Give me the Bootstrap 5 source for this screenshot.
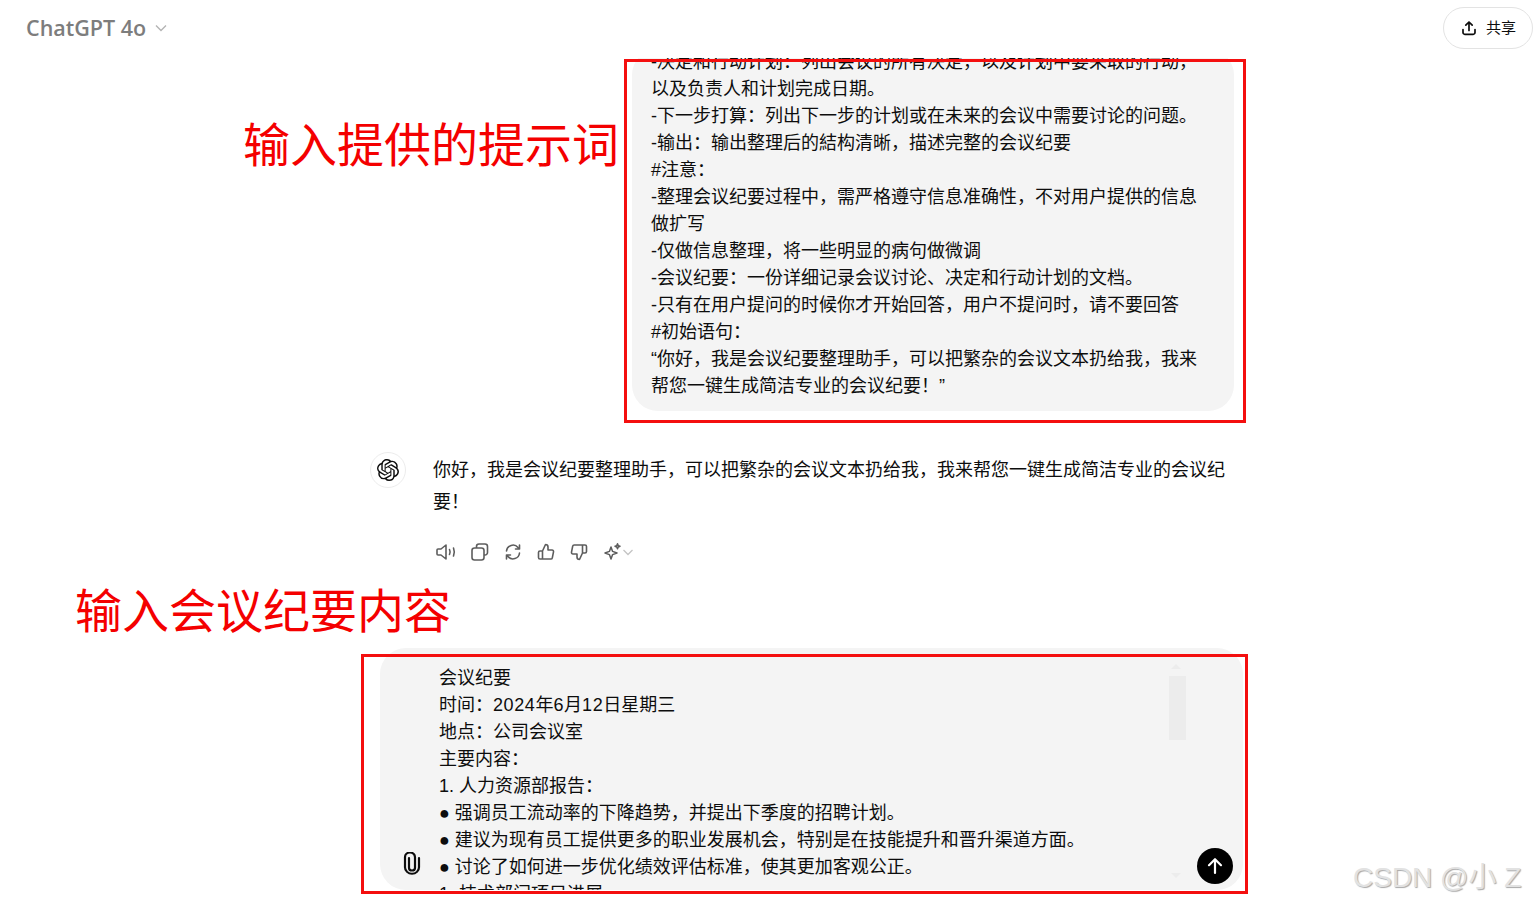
<!DOCTYPE html>
<html lang="zh-CN">
<head>
  <meta charset="UTF-8" />
  <meta name="viewport" content="width=device-width, initial-scale=1.0"/>
  <title>ChatGPT 4o</title>
  <link href="https://cdn.jsdelivr.net/npm/bootstrap@5.3.2/dist/css/bootstrap.min.css" rel="stylesheet">
  <style>
    body {
      margin: 0;
      background: #fff;
      color: #0d0d0d;
      font-family: "Liberation Sans", "Noto Sans CJK SC", sans-serif;
      font-size: 18px;
      overflow: hidden;
    }
    .app-shell { height: 904px; overflow: hidden; }

    /* HEADER */
    .top-bar { height: 58px; padding: 7px 1px 0 26px; }
    .model-name { font: 600 21.5px/28px "Open Sans", sans-serif; color: #7d7d7d; margin-top: 7px; }
    .share-btn {
      width: 90px; height: 42px;
      border: 1px solid #e3e3e3; border-radius: 21px;
      background: #fff; color: #0d0d0d;
      font-size: 15px; padding: 0;
    }

    /* THREAD */
    .thread { height: 590px; overflow: hidden; padding-left: 370px; width: 1234px; }
    .user-bubble {
      align-self: flex-end;
      width: 602px;
      background: #f4f4f4;
      border-radius: 26px;
      padding: 0 20px 11px 19px;
      line-height: 27px;
      margin-bottom: 42px;
    }
    .bot-avatar {
      width: 36px; height: 36px; flex: none;
      border: 1px solid #ececec; border-radius: 50%;
      margin: -1px 27px 0 0;
    }
    .bot-text { line-height: 32px; padding-top: 1px; }
    .action-row { height: 22px; margin: 24px 0 86px; gap: 13px; color: #5d5d5d; padding-left: 66px; }
    .action-row svg { display: block; }

    /* COMPOSER */
    .composer-wrap { padding-left: 380px; }
    .composer {
      width: 863px; height: 242px;
      background: #f4f4f4;
      border-radius: 26px;
      overflow: hidden;
      padding: 17px 0 0 59px;
      line-height: 27px;
      position: relative;
    }
    .num-wide { letter-spacing: .6px; }
    .fake-thumb { position: absolute; left: 789px; top: 28px; width: 17px; height: 64px; background: #ececec; }
    .fake-arrow { position: absolute; left: 791px; width: 0; height: 0; border-left: 5px solid transparent; border-right: 5px solid transparent; }
    .fake-arrow.up { top: 16px; border-bottom: 5px solid #ececec; }
    .fake-arrow.down { top: 225px; border-top: 5px solid #ececec; }
    .clip-btn { position: absolute; left: 20px; top: 204px; color: #0d0d0d; }
    .send-btn {
      position: absolute; left: 817px; top: 200px;
      width: 36px; height: 36px; border-radius: 50%;
      background: #000; color: #fff; border: 0; padding: 0;
    }

    /* ANNOTATIONS */
    .note-box { position: absolute; border: 3px solid #f40f0f; }
    .note-a { left: 624px; top: 59px; width: 622px; height: 364px; }
    .note-b { left: 361px; top: 654px; width: 887px; height: 240px; }
    .note-label { position: absolute; color: #f40000; font-size: 47px; line-height: 56px; font-family: "Noto Sans CJK SC", serif; white-space: nowrap; }
    .label-a { left: 243px; top: 114px; }
    .label-b { left: 75px; top: 580px; }
    .watermark {
      position: absolute; left: 1353px; top: 859px;
      font-size: 28px; line-height: 38px; color: #e2e2e2; white-space: nowrap;
      text-shadow: 1px 1px 1px #a8a8a8;
    }
  </style>
</head>
<body>
  <div class="app-shell position-relative d-flex flex-column">

    <!-- Header -->
    <header class="top-bar d-flex justify-content-between align-items-start">
      <div class="model-name d-flex align-items-center gap-2">ChatGPT 4o
        <svg width="14" height="14" viewBox="0 0 14 14" fill="none" stroke="#b4b4b4" stroke-width="1.4"><path d="M2 4.5l5 5 5-5"/></svg>
      </div>
      <button class="share-btn d-flex align-items-center justify-content-center gap-2">
        <svg width="18" height="18" viewBox="0 0 18 18" fill="none" stroke="#0d0d0d" stroke-width="1.7" stroke-linecap="round" stroke-linejoin="round"><path d="M9 11.5V3.2M5.8 6.2L9 3l3.2 3.2M3 10.5v3a1.8 1.8 0 0 0 1.8 1.8h8.4a1.8 1.8 0 0 0 1.8-1.8v-3"/></svg>
        共享
      </button>
    </header>

    <!-- Thread -->
    <main class="thread d-flex flex-column justify-content-end">
      <div class="user-bubble">
        -决定和行动计划：列出会议的所有决定，以及计划中要采取的行动，<br>
        以及负责人和计划完成日期。<br>
        -下一步打算：列出下一步的计划或在未来的会议中需要讨论的问题。<br>
        -输出：输出整理后的結构清晰，描述完整的会议纪要<br>
        #注意：<br>
        -整理会议纪要过程中，需严格遵守信息准确性，不对用户提供的信息<br>
        做扩写<br>
        -仅做信息整理，将一些明显的病句做微调<br>
        -会议纪要：一份详细记录会议讨论、决定和行动计划的文档。<br>
        -只有在用户提问的时候你才开始回答，用户不提问时，请不要回答<br>
        #初始语句：<br>
        “你好，我是会议纪要整理助手，可以把繁杂的会议文本扔给我，我来<br>
        帮您一键生成简洁专业的会议纪要！”
      </div>

      <div class="d-flex">
        <div class="bot-avatar d-flex align-items-center justify-content-center">
          <svg width="22" height="22" viewBox="0 0 24 24" fill="#0d0d0d"><path d="M22.2819 9.8211a5.9847 5.9847 0 0 0-.5157-4.9108 6.0462 6.0462 0 0 0-6.5098-2.9A6.0651 6.0651 0 0 0 4.9807 4.1818a5.9847 5.9847 0 0 0-3.9977 2.9 6.0462 6.0462 0 0 0 .7427 7.0966 5.98 5.98 0 0 0 .511 4.9107 6.051 6.051 0 0 0 6.5146 2.9001A5.9847 5.9847 0 0 0 13.2599 24a6.0557 6.0557 0 0 0 5.7718-4.2058 5.9894 5.9894 0 0 0 3.9977-2.9001 6.0557 6.0557 0 0 0-.7475-7.0729zm-9.022 12.6081a4.4755 4.4755 0 0 1-2.8764-1.0408l.1419-.0804 4.7783-2.7582a.7948.7948 0 0 0 .3927-.6813v-6.7369l2.02 1.1686a.071.071 0 0 1 .038.052v5.5826a4.504 4.504 0 0 1-4.4945 4.4944zm-9.6607-4.1254a4.4708 4.4708 0 0 1-.5346-3.0137l.142.0852 4.783 2.7582a.7712.7712 0 0 0 .7806 0l5.8428-3.3685v2.3324a.0804.0804 0 0 1-.0332.0615L9.74 19.9502a4.4992 4.4992 0 0 1-6.1408-1.6464zM2.3408 7.8956a4.485 4.485 0 0 1 2.3655-1.9728V11.6a.7664.7664 0 0 0 .3879.6765l5.8144 3.3543-2.0201 1.1685a.0757.0757 0 0 1-.071 0l-4.8303-2.7865A4.504 4.504 0 0 1 2.3408 7.872zm16.5963 3.8558L13.1038 8.364 15.1192 7.2a.0757.0757 0 0 1 .071 0l4.8303 2.7913a4.4944 4.4944 0 0 1-.6765 8.1042v-5.6772a.79.79 0 0 0-.407-.667zm2.0107-3.0231l-.142-.0852-4.7735-2.7818a.7759.7759 0 0 0-.7854 0L9.409 9.2297V6.8974a.0662.0662 0 0 1 .0284-.0615l4.8303-2.7866a4.4992 4.4992 0 0 1 6.6802 4.66zM8.3065 12.863l-2.02-1.1638a.0804.0804 0 0 1-.038-.0567V6.0742a4.4992 4.4992 0 0 1 7.3757-3.4537l-.142.0805L8.704 5.459a.7948.7948 0 0 0-.3927.6813zm1.0976-2.3654l2.602-1.4998 2.6069 1.4998v2.9994l-2.5974 1.4997-2.6067-1.4997Z"/></svg>
        </div>
        <div class="bot-text">你好，我是会议纪要整理助手，可以把繁杂的会议文本扔给我，我来帮您一键生成简洁专业的会议纪<br>要！</div>
      </div>

      <div class="action-row d-flex align-items-center">
        <svg width="21" height="18" viewBox="0 0 21 18" fill="none" stroke="currentColor" stroke-width="1.6" stroke-linejoin="round" stroke-linecap="round"><path d="M2 6h3l5-4v14l-5-4H2a1 1 0 0 1-1-1V7a1 1 0 0 1 1-1z"/><path d="M13.5 6.5c.7 1.5.7 3.5 0 5M17.5 5c1 2.500 1 5.500 0 8"/></svg>
        <svg width="20" height="20" viewBox="0 0 20 20" fill="none" stroke="currentColor" stroke-width="1.6" stroke-linejoin="round"><rect x="2" y="6" width="12" height="12" rx="2.500"/><path d="M6.500 6V4.500A2.500 2.500 0 0 1 9 2h6a2.500 2.500 0 0 1 2.500 2.500v6A2.500 2.500 0 0 1 15 13h-1"/></svg>
        <svg width="20" height="20" viewBox="0 0 20 20" fill="none" stroke="currentColor" stroke-width="1.6" stroke-linecap="round" stroke-linejoin="round"><path d="M3.500 9a6.500 6.500 0 0 1 11.500-3.500l1.500 1.500M16.500 3v4h-4M16.500 11a6.500 6.500 0 0 1-11.500 3.500L3.500 13M3.500 17v-4h4"/></svg>
        <svg width="20" height="20" viewBox="0 0 20 20" fill="none" stroke="currentColor" stroke-width="1.6" stroke-linejoin="round"><path d="M6.500 9l3-6.500c1.500 0 2.500 1 2.500 2.500v3h4a1.500 1.500 0 0 1 1.500 1.800l-1.200 6a1.500 1.500 0 0 1-1.500 1.200H6.500zM6.500 9H4a1.500 1.500 0 0 0-1.500 1.500v5A1.500 1.500 0 0 0 4 17h2.500"/></svg>
        <svg width="20" height="20" viewBox="0 0 20 20" fill="none" stroke="currentColor" stroke-width="1.600" stroke-linejoin="round"><path d="M13.500 11l-3 6.500c-1.500 0-2.500-1-2.500-2.500v-3H4a1.500 1.500 0 0 1-1.500-1.800l1.200-6A1.500 1.500 0 0 1 5.200 3h8.300zM13.500 11H16a1.500 1.500 0 0 0 1.500-1.500v-5A1.500 1.500 0 0 0 16 3h-2.500"/></svg>
        <div class="d-flex align-items-center">
          <svg width="20" height="20" viewBox="0 0 20 20" fill="none" stroke="currentColor" stroke-width="1.500" stroke-linejoin="round"><path d="M9 5l1.600 4.400L15 11l-4.400 1.600L9 17l-1.600-4.400L3 11l4.400-1.600zM15.500 1.800l.7 1.800 1.800.7-1.800.7-.7 1.800-.7-1.800-1.800-.7 1.800-.7z"/></svg>
          <svg width="12" height="12" viewBox="0 0 12 12" fill="none" stroke="#c4c4c4" stroke-width="1.300"><path d="M1.500 4l4.500 4.500L10.500 4"/></svg>
        </div>
      </div>
    </main>

    <!-- Composer -->
    <div class="composer-wrap">
      <div class="composer">
        会议纪要<br>
        时间：<span class="num-wide">2024</span>年<span class="num-wide">6</span>月<span class="num-wide">12</span>日星期三<br>
        地点：公司会议室<br>
        主要内容：<br>
        1. 人力资源部报告：<br>
        ● 强调员工流动率的下降趋势，并提出下季度的招聘计划。<br>
        ● 建议为现有员工提供更多的职业发展机会，特别是在技能提升和晋升渠道方面。<br>
        ● 讨论了如何进一步优化绩效评估标准，使其更加客观公正。<br>
        1. 技术部门项目进展
        <span class="fake-arrow up"></span>
        <span class="fake-thumb"></span>
        <span class="fake-arrow down"></span>
        <svg class="clip-btn" width="24" height="24" viewBox="0 0 24 24" fill="none" stroke="currentColor" stroke-width="2.200" stroke-linecap="round"><path d="M9 7v10a3 3 0 0 0 6 0V6a5 5 0 0 0-10 0v10.500a7 7 0 0 0 14 0V7" transform="translate(0 -.5) scale(1 .95)"/></svg>
        <button class="send-btn d-flex align-items-center justify-content-center">
          <svg width="20" height="20" viewBox="0 0 20 20" fill="none" stroke="#fff" stroke-width="2.200" stroke-linecap="round" stroke-linejoin="round"><path d="M10 17V3.500M4 9.200L10 3.200l6 6"/></svg>
        </button>
      </div>
    </div>

    <!-- Annotations drawn over the screenshot -->
    <div class="note-box note-a"></div>
    <div class="note-box note-b"></div>
    <div class="note-label label-a">输入提供的提示词</div>
    <div class="note-label label-b">输入会议纪要内容</div>
    <div class="watermark">CSDN @小 Z</div>
  </div>

  <script src="https://cdn.jsdelivr.net/npm/bootstrap@5.3.2/dist/js/bootstrap.bundle.min.js"></script>
</body>
</html>
